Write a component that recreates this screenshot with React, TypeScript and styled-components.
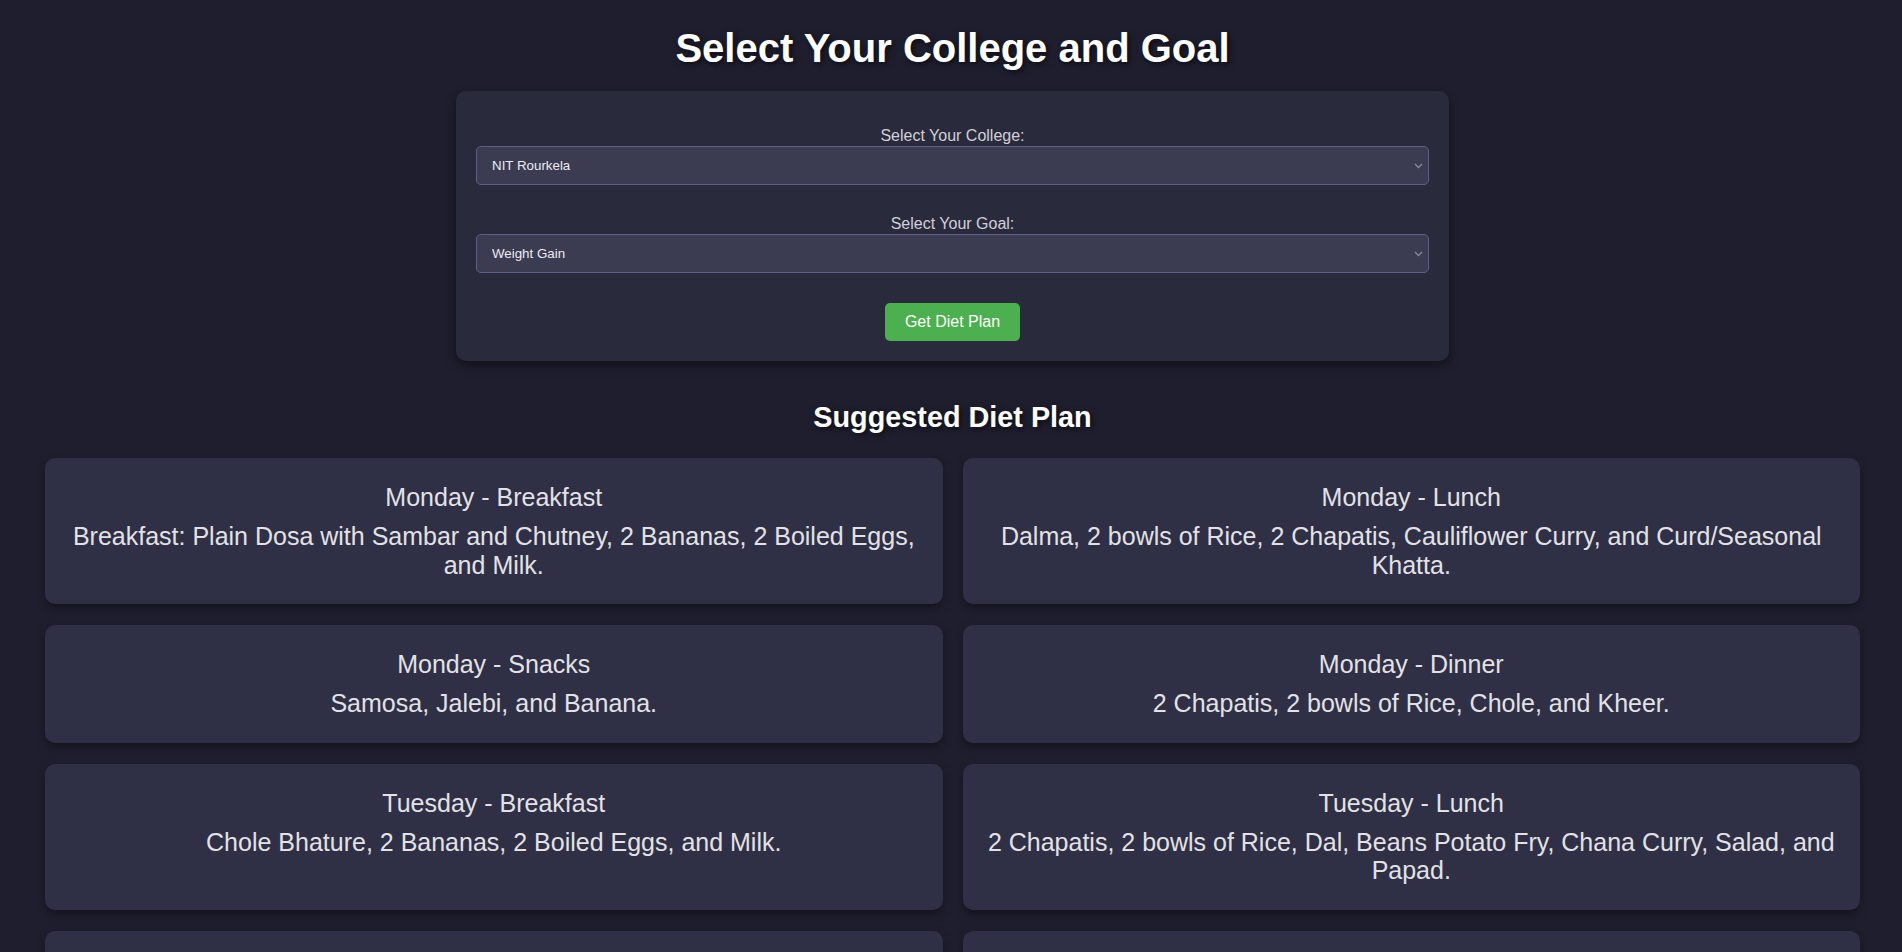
import React from "react";
import styled, { createGlobalStyle } from "styled-components";

const GlobalStyle = createGlobalStyle`
  html, body {
    margin: 0;
    padding: 0;
    background: #1e1e2e;
  }
  body {
    font-family: "Liberation Sans", Arial, sans-serif;
    color: #e0e0e0;
  }
  * { box-sizing: border-box; }
`;

const Page = styled.div`
  padding: 25px 42px 40px 45px;
  min-height: 100vh;
  background: #1e1e2e;
`;

const Title = styled.h1`
  margin: 0 0 20px;
  font-size: 40px;
  line-height: 46px;
  font-weight: 700;
  color: #ffffff;
  text-align: center;
  text-shadow: 2px 2px 6px rgba(0, 0, 0, 0.6);
`;

const FormCard = styled.div`
  width: 993px;
  margin: 0 auto;
  padding: 36px 20px 20px;
  background: #2a2a3d;
  border-radius: 10px;
  box-shadow: 0 4px 12px rgba(0, 0, 0, 0.45);
  display: flex;
  flex-direction: column;
  gap: 30px;
`;

const Field = styled.div`
  display: flex;
  flex-direction: column;
  gap: 1px;
`;

const Label = styled.label`
  display: block;
  font-size: 16px;
  line-height: 18px;
  color: #d0d0d8;
  text-align: center;
`;

const SelectWrap = styled.div`
  position: relative;
`;

const Select = styled.select`
  appearance: none;
  -webkit-appearance: none;
  width: 100%;
  height: 39px;
  padding: 0 30px 0 15px;
  background: #3b3b52;
  border: 1px solid #5e5e88;
  border-radius: 5px;
  color: #ececf2;
  font-family: "Liberation Sans", Arial, sans-serif;
  font-size: 13.333px;
  outline: none;
`;

const Chevron = styled.svg`
  position: absolute;
  right: 6px;
  top: 50%;
  width: 9px;
  height: 6px;
  margin-top: -3px;
  pointer-events: none;
`;

const Button = styled.button`
  align-self: center;
  padding: 0 20px;
  height: 38px;
  background: #4caf50;
  color: #ffffff;
  border: none;
  border-radius: 5px;
  font-family: "Liberation Sans", Arial, sans-serif;
  font-size: 16px;
  cursor: pointer;
`;

const SubTitle = styled.h2`
  margin: 40.3px 0 23.9px;
  font-size: 28.8px;
  line-height: 33px;
  font-weight: 700;
  color: #ffffff;
  text-align: center;
  text-shadow: 2px 2px 6px rgba(0, 0, 0, 0.6);
`;

const Grid = styled.div`
  display: grid;
  grid-template-columns: 1fr 1fr;
  column-gap: 20px;
  row-gap: 21px;
`;

const MealCard = styled.div`
  background: #2f2f45;
  border-radius: 10px;
  padding: 20px;
  box-shadow: 0 4px 10px rgba(0, 0, 0, 0.35);
  text-align: center;
  color: #e2e2e6;
`;

const MealTitle = styled.h3`
  margin: 5px 0 10px;
  font-size: 25px;
  line-height: 28.75px;
  font-weight: 400;
`;

const MealText = styled.p`
  margin: 0 0 5px;
  font-size: 25px;
  line-height: 28.75px;
`;

const meals = [
  { title: "Monday - Breakfast", text: "Breakfast: Plain Dosa with Sambar and Chutney, 2 Bananas, 2 Boiled Eggs, and Milk." },
  { title: "Monday - Lunch", text: "Dalma, 2 bowls of Rice, 2 Chapatis, Cauliflower Curry, and Curd/Seasonal Khatta." },
  { title: "Monday - Snacks", text: "Samosa, Jalebi, and Banana." },
  { title: "Monday - Dinner", text: "2 Chapatis, 2 bowls of Rice, Chole, and Kheer." },
  { title: "Tuesday - Breakfast", text: "Chole Bhature, 2 Bananas, 2 Boiled Eggs, and Milk." },
  { title: "Tuesday - Lunch", text: "2 Chapatis, 2 bowls of Rice, Dal, Beans Potato Fry, Chana Curry, Salad, and Papad." },
  { title: "Tuesday - Snacks", text: "Pakora, Tea, and Banana." },
  { title: "Tuesday - Dinner", text: "2 Chapatis, 2 bowls of Rice, Paneer Curry, and Gulab Jamun." },
];

const ChevronIcon = () => (
  <Chevron viewBox="0 0 9 6">
    <path d="M1 1 L4.5 4.5 L8 1" fill="none" stroke="#8a8a96" strokeWidth="1.3" />
  </Chevron>
);

export default function App() {
  return (
    <>
      <GlobalStyle />
      <Page>
        <Title>Select Your College and Goal</Title>
        <FormCard>
          <Field>
            <Label htmlFor="college">Select Your College:</Label>
            <SelectWrap>
              <Select id="college" defaultValue="nitr">
                <option value="nitr">NIT Rourkela</option>
                <option value="iitb">IIT Bombay</option>
              </Select>
              <ChevronIcon />
            </SelectWrap>
          </Field>
          <Field>
            <Label htmlFor="goal">Select Your Goal:</Label>
            <SelectWrap>
              <Select id="goal" defaultValue="gain">
                <option value="gain">Weight Gain</option>
                <option value="loss">Weight Loss</option>
              </Select>
              <ChevronIcon />
            </SelectWrap>
          </Field>
          <Button type="button">Get Diet Plan</Button>
        </FormCard>
        <SubTitle>Suggested Diet Plan</SubTitle>
        <Grid>
          {meals.map((m) => (
            <MealCard key={m.title}>
              <MealTitle>{m.title}</MealTitle>
              <MealText>{m.text}</MealText>
            </MealCard>
          ))}
        </Grid>
      </Page>
    </>
  );
}
